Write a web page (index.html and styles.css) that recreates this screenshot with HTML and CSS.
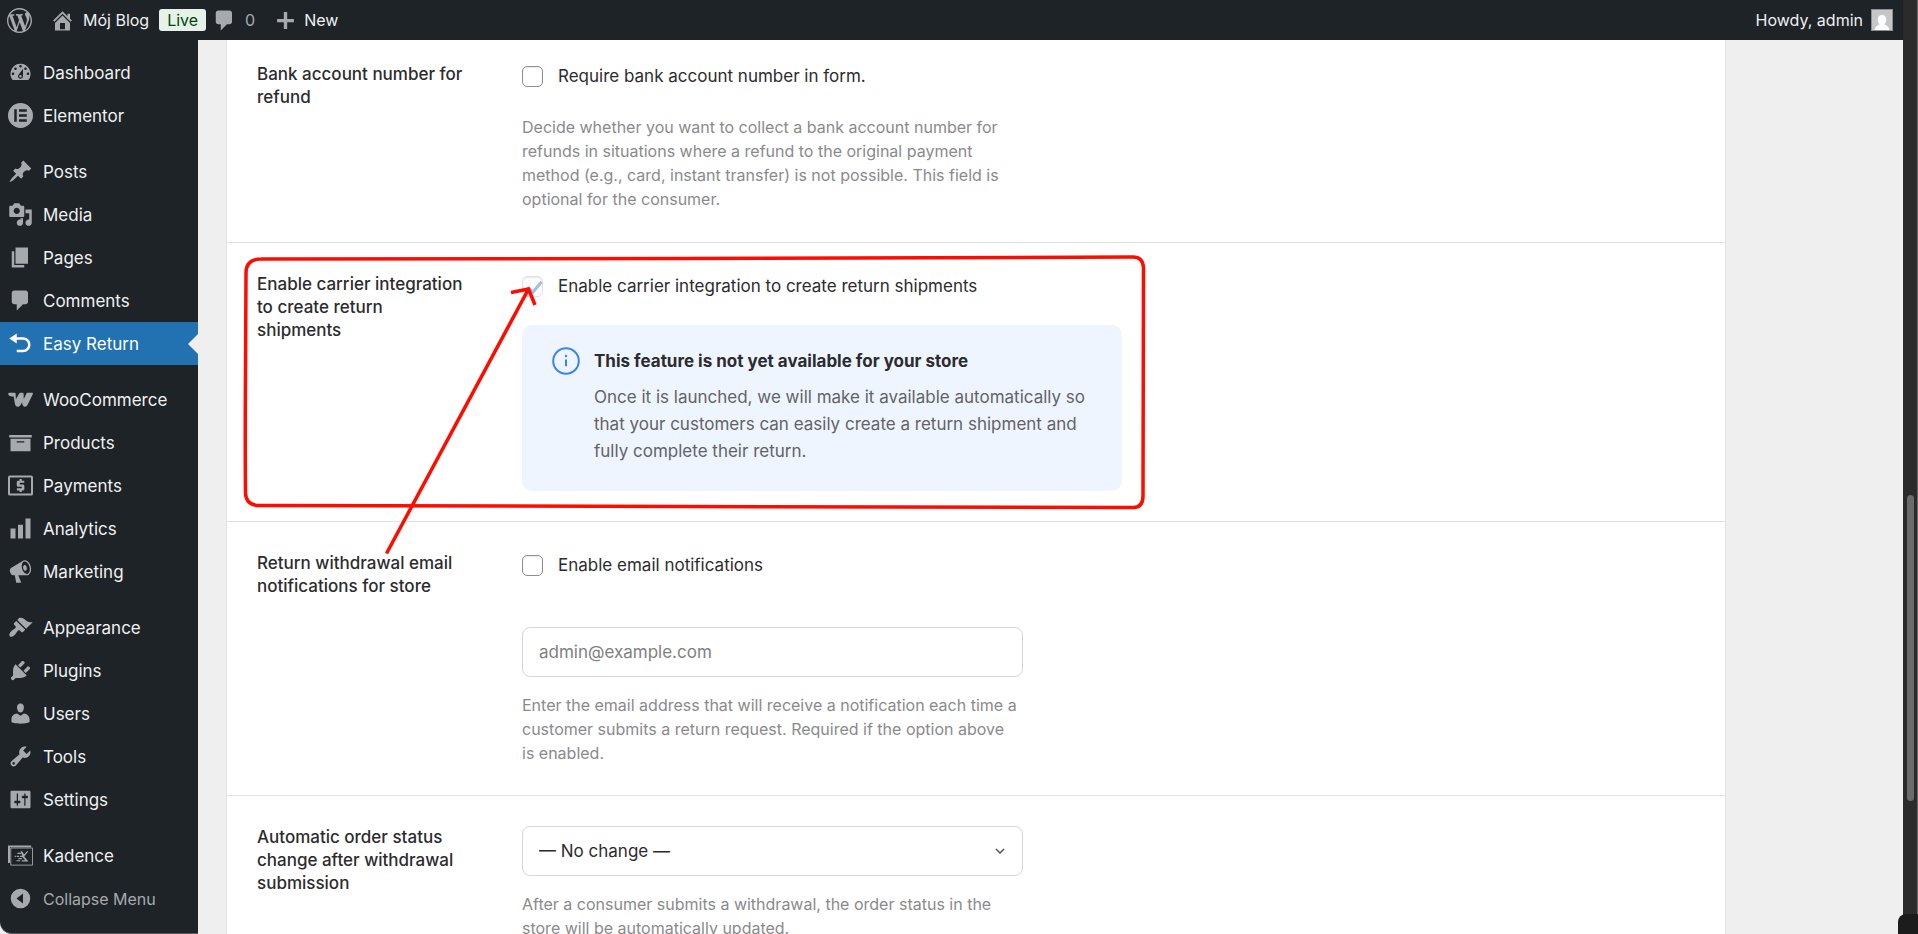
FILE: index.html
```html
<!DOCTYPE html>
<html lang="en">
<head>
<meta charset="utf-8">
<title>Easy Return settings</title>
<link rel="stylesheet" href="styles.css">
</head>
<body>
<div class="window">
  <div class="screen">
    <header class="adminbar">
      <a href="#" class="bar-item" aria-label="About WordPress"><svg class="bar-logo" viewBox="0 0 20 20"><path d="M20 10c0-5.51-4.49-10-10-10C4.48 0 0 4.49 0 10c0 5.52 4.48 10 10 10 5.51 0 10-4.48 10-10zM7.78 15.37L4.37 6.22c.55-.02 1.17-.08 1.17-.08.5-.06.44-1.13-.06-1.11 0 0-1.45.11-2.37.11-.18 0-.37 0-.58-.01C4.12 2.69 6.87 1.11 10 1.11c2.33 0 4.45.87 6.05 2.34-.68-.11-1.65.39-1.65 1.58 0 .74.45 1.36.9 2.1.35.61.55 1.36.55 2.46 0 1.49-1.4 5-1.4 5l-3.03-8.37c.54-.02.82-.17.82-.17.5-.05.44-1.25-.06-1.22 0 0-1.44.12-2.38.12-.87 0-2.33-.12-2.33-.12-.5-.03-.56 1.2-.06 1.22l.92.08 1.26 3.41zM17.41 10c.24-.64.74-1.87.43-4.25.7 1.29 1.05 2.71 1.05 4.25 0 3.29-1.73 6.24-4.4 7.78.97-2.59 1.94-5.2 2.92-7.78zM6.1 18.09C3.12 16.65 1.11 13.53 1.11 10c0-1.3.23-2.48.72-3.59C3.25 10.3 4.67 14.2 6.1 18.09zm4.03-6.63l2.58 6.98c-.86.29-1.76.45-2.71.45-.79 0-1.57-.11-2.29-.33.81-2.38 1.62-4.74 2.42-7.1z"/></svg></a>
      <a href="#" class="bar-item bar-site"><svg viewBox="0 0 20 20"><path d="M16 8.5l1.53 1.53-1.06 1.06L10 4.6l-6.47 6.49-1.06-1.06L10 2.5l4 4v-2h2v4zm-6-2.46l6 5.99V18H4v-5.97zM12 17v-5H8v5h4z"/></svg><span>Mój Blog</span></a>
      <a href="#" class="badge">Live</a>
      <a href="#" class="bar-item bar-comments"><svg viewBox="0 0 20 20"><path d="M5 2h9c1.1 0 2 .9 2 2v7c0 1.1-.9 2-2 2h-2l-5 5v-5H5c-1.1 0-2-.9-2-2V4c0-1.1.9-2 2-2z"/></svg><span class="count">0</span></a>
      <a href="#" class="bar-item bar-new"><svg viewBox="0 0 20 20"><path d="M18 8.500v3.200h-6.400v6.300H8.400v-6.300H2V8.500h6.400V2h3.200v6.500z"/></svg><span>New</span></a>
      <a href="#" class="bar-item bar-user"><span>Howdy, admin</span><svg class="avatar" viewBox="0 0 22 22"><rect width="22" height="22" fill="#8c8f94"/><rect x="1" y="1" width="20" height="20" fill="#c6c6c6"/><path fill="#fff" d="M11 6c2.600 0 4.300 2 4.300 4.600 0 2-.8 3.800-2 4.900 2.600.6 4.600 2.400 5.100 5.500H3.600c.5-3.100 2.500-4.900 5.100-5.500-1.200-1.100-2-2.900-2-4.900C6.700 8 8.400 6 11 6z"/></svg></a>
    </header>
    <div class="body">
      <nav class="sidebar" aria-label="Main menu">
        <ul class="menu">
          <li><a href="#"><svg viewBox="0 0 20 20"><path fill-rule="evenodd" d="M3.760 16h12.480A7.998 7.998 0 0010 3a7.998 7.998 0 00-6.240 13zM10 4c.55 0 1 .45 1 1s-.45 1-1 1-1-.45-1-1 .45-1 1-1zM6 6c.55 0 1 .45 1 1s-.45 1-1 1-1-.45-1-1 .45-1 1-1zm8 0c.55 0 1 .45 1 1s-.45 1-1 1-1-.45-1-1 .45-1 1-1zm-5.370 5.550L12 7v6c0 1.100-.9 2-2 2s-2-.9-2-2c0-.57.24-1.080.63-1.450zM4 10c.55 0 1 .45 1 1s-.45 1-1 1-1-.45-1-1 .45-1 1-1zm12 0c.55 0 1 .45 1 1s-.45 1-1 1-1-.45-1-1 .45-1 1-1zm-5 3c0-.55-.45-1-1-1s-1 .45-1 1 .45 1 1 1 1-.45 1-1z"/></svg>Dashboard</a></li>
          <li><a href="#"><svg viewBox="0 0 20 20"><path fill-rule="evenodd" d="M10 0a10 10 0 100 20 10 10 0 000-20zM5 5h2v10H5zM8.800 5H15v2H8.800zM8.800 9H15v2H8.800zM8.800 13H15v2H8.800z"/></svg>Elementor</a></li>
        </ul>
        <ul class="menu">
          <li><a href="#"><svg viewBox="0 0 20 20"><path d="M10.440 3.020l1.820-1.820 6.360 6.350-1.830 1.820c-1.050-.68-2.480-.57-3.410.36l-.75.75c-.92.93-1.040 2.350-.35 3.410l-1.830 1.820-2.410-2.410-2.800 2.790c-.42.42-3.380 2.710-3.800 2.290s1.860-3.390 2.280-3.810l2.790-2.790L4.100 9.360l1.830-1.820c1.050.69 2.480.57 3.400-.36l.75-.75c.93-.92 1.050-2.350.36-3.410z"/></svg>Posts</a></li>
          <li><a href="#"><svg viewBox="0 0 20 20"><path fill-rule="evenodd" d="M13 11V4c0-.55-.45-1-1-1h-1.670L9 1H5L3.670 3H2c-.55 0-1 .45-1 1v7c0 .55.45 1 1 1h10c.55 0 1-.45 1-1zM7 4.500c1.380 0 2.500 1.120 2.500 2.500S8.380 9.500 7 9.500 4.500 8.380 4.500 7 5.620 4.500 7 4.500zM14 6h5v10.500c0 1.380-1.120 2.500-2.500 2.500S14 17.880 14 16.500s1.120-2.500 2.500-2.500c.17 0 .34.02.5.05V9h-3V6zm-4 8.050V13h2v3.500c0 1.380-1.120 2.500-2.500 2.500S7 17.880 7 16.500 8.120 14 9.500 14c.17 0 .34.02.5.05z"/></svg>Media</a></li>
          <li><a href="#"><svg viewBox="0 0 20 20"><path d="M6 15V2h10v13H6zm-1 1h8v2H3V5h2v11z"/></svg>Pages</a></li>
          <li><a href="#"><svg viewBox="0 0 20 20"><path d="M5 2h9c1.100 0 2 .9 2 2v7c0 1.100-.9 2-2 2h-2l-5 5v-5H5c-1.100 0-2-.9-2-2V4c0-1.100.9-2 2-2z"/></svg>Comments</a></li>
          <li><a href="#" class="current" aria-current="page"><svg viewBox="0 0 20 20"><path d="M12 5H7V2L1 6l6 4V7h5c2.200 0 4 1.800 4 4s-1.800 4-4 4H7v2h5c3.300 0 6-2.700 6-6s-2.700-6-6-6z"/></svg>Easy Return</a></li>
        </ul>
        <ul class="menu">
          <li><a href="#"><svg viewBox="0 0 20 20"><path d="M1 4.500h4.300c.5 0 .8.3.8.8l.2 4.500 2.600-4.600c.3-.5.6-.7 1.100-.7h1.500c.7 0 1 .4 1 1l.1 4.300 1.900-4.200c.3-.8.8-1.100 1.500-1.100h3c.9 0 1.200.5.8 1.300l-4.100 8.400c-.5 1-1.200 1.500-2.100 1.500-1.400 0-2-.8-2.200-2.700l-.1-.9-1.300 2.200c-.6 1-1.300 1.400-2.100 1.400-1.300 0-2.100-.9-2.400-2.600L4.500 7.500H3.300C1.500 7.500.2 6.700.2 5.300c0-.5.3-.8.8-.8z"/></svg>WooCommerce</a></li>
          <li><a href="#"><svg viewBox="0 0 20 20"><path fill-rule="evenodd" d="M19 4v2H1V4h18zM2 7h16v10H2V7zm11 3V9H7v1h6z"/></svg>Products</a></li>
          <li><a href="#"><svg viewBox="0 0 20 20"><path fill-rule="evenodd" d="M1.500 2h17A1.500 1.500 0 0120 3.500v13a1.500 1.500 0 01-1.500 1.500h-17A1.500 1.500 0 010 16.500v-13A1.500 1.500 0 011.500 2zM1.600 3.600v12.800h16.800V3.600z"/><path d="M9.200 4.800h1.800v1.300h2v1.700H9.400v1.300h2.500c.7 0 1.200.5 1.200 1.200v2.400c0 .7-.5 1.200-1.200 1.200H11v1.300H9.200v-1.300H7.100v-1.700h3.900v-1.300H8.200c-.7 0-1.200-.5-1.200-1.200V7.300c0-.7.500-1.200 1.200-1.200h1z"/></svg>Payments</a></li>
          <li><a href="#"><svg viewBox="0 0 20 20"><path d="M18 18V2h-4v16h4zm-6 0V7H8v11h4zm-6 0v-8H2v8h4z"/></svg>Analytics</a></li>
          <li><a href="#"><svg viewBox="0 0 20 20"><path fill-rule="evenodd" d="M18.150 5.940c.46 1.620.38 3.220-.02 4.480-.42 1.280-1.260 2.180-2.300 2.480-.16.06-.26.06-.4.06-.06.02-.12.02-.18.02-.06.02-.14.02-.22.02h-6.800l2.220 5.500c.02.14-.06.26-.14.34-.08.1-.24.16-.34.16H6.950c-.1 0-.26-.06-.34-.16-.08-.08-.16-.2-.14-.34l-1-5.500H4.250l-.02-.02c-.5.06-1.080-.18-1.540-.62s-.88-1.080-1.060-1.880c-.24-.8-.2-1.560-.02-2.200.18-.62.58-1.080 1.060-1.300l.02-.02 9-5.400c.1-.06.18-.1.24-.16.06-.04.14-.08.24-.12.16-.08.28-.12.5-.18 1.040-.3 2.240.1 3.220.98s1.840 2.240 2.260 3.860zm-2.580 5.980h-.02c.4-.1.74-.34 1.040-.7.58-.7.86-1.760.86-3.040 0-.64-.1-1.300-.28-1.980-.34-1.360-1.020-2.500-1.780-3.240s-1.680-1.100-2.460-.88c-.82.22-1.400.96-1.700 2-.32 1.040-.28 2.360.06 3.720.38 1.360 1 2.500 1.800 3.240.78.74 1.620 1.100 2.480.88zm-2.540-7.080c.22-.04.42-.02.62.04.38.16.76.48 1.020 1s.42 1.200.42 1.780c0 .3-.04.56-.12.8-.18.48-.44.84-.86.94-.34.1-.8-.06-1.140-.4s-.64-.86-.78-1.500c-.18-.62-.12-1.240.02-1.720s.48-.84.82-.94z"/></svg>Marketing</a></li>
        </ul>
        <ul class="menu">
          <li><a href="#"><svg viewBox="0 0 20 20"><path d="M14.480 11.060L7.410 3.990l1.500-1.500c.5-.56 2.300-.47 3.510.32 1.210.8 1.430 1.280 2.910 2.100 1.180.64 2.450 1.260 4.450.85zm-.71.71L6.700 4.700 4.930 6.470c-.39.39-.39 1.020 0 1.410l1.060 1.060c.39.39.39 1.030 0 1.420-.6.6-1.430 1.110-2.210 1.690-.35.26-.7.53-1.010.84C1.430 14.230.4 16.080 1.400 17.070c.99 1 2.840-.03 4.180-1.360.31-.31.58-.66.85-1.020.57-.78 1.080-1.610 1.690-2.210.39-.39 1.020-.39 1.410 0l1.060 1.060c.39.39 1.020.39 1.410 0z"/></svg>Appearance</a></li>
          <li><a href="#"><svg viewBox="0 0 20 20"><path d="M13.110 4.360L9.870 7.600 8 5.730l3.240-3.240c.35-.34 1.050-.2 1.560.32.520.51.66 1.210.31 1.550zm-8 1.770l.91-1.120 9.010 9.010-1.190.84c-.71.71-2.630 1.160-3.820 1.160H6.140L4.900 17.260c-.59.59-1.540.59-2.120 0-.59-.58-.59-1.530 0-2.120l1.240-1.240v-3.880c0-1.130.4-3.190 1.090-3.890zm7.260 3.970l3.240-3.240c.34-.35 1.040-.21 1.550.31.520.51.66 1.210.31 1.550l-3.240 3.250z"/></svg>Plugins</a></li>
          <li><a href="#"><svg viewBox="0 0 20 20"><path d="M10 9.250c-2.270 0-2.730-3.440-2.730-3.440C7 4.020 7.820 2 9.970 2c2.160 0 2.980 2.020 2.710 3.810 0 0-.41 3.440-2.680 3.440zm0 2.570L12.720 10c2.390 0 4.520 2.330 4.520 4.530v2.490s-3.650 1.130-7.240 1.130c-3.650 0-7.240-1.130-7.240-1.130v-2.490c0-2.250 1.940-4.480 4.470-4.480z"/></svg>Users</a></li>
          <li><a href="#"><svg viewBox="0 0 20 20"><path fill-rule="evenodd" d="M16.680 9.770c-1.340 1.340-3.300 1.670-4.950.99l-5.410 6.520c-.99.99-2.590.99-3.580 0s-.99-2.590 0-3.570l6.520-5.420c-.68-1.650-.35-3.610.99-4.950 1.280-1.280 3.120-1.620 4.720-1.060l-2.890 2.890 2.820 2.820 2.860-2.870c.53 1.580.18 3.390-1.080 4.650zM3.810 16.210c.4.39 1.040.39 1.430 0 .4-.4.4-1.040 0-1.430-.39-.4-1.030-.4-1.430 0-.39.39-.39 1.030 0 1.430z"/></svg>Tools</a></li>
          <li><a href="#"><svg viewBox="0 0 20 20"><path fill-rule="evenodd" d="M18 16V4c0-.55-.45-1-1-1H3c-.55 0-1 .45-1 1v12c0 .55.45 1 1 1h14c.55 0 1-.45 1-1zM8 11h1c.55 0 1 .45 1 1s-.45 1-1 1H8v1.500c0 .28-.22.5-.5.5s-.5-.22-.5-.5V13H6c-.55 0-1-.45-1-1s.45-1 1-1h1V5.500c0-.28.22-.5.5-.5s.5.22.5.5V11zm5-2h-1c-.55 0-1-.45-1-1s.45-1 1-1h1V5.500c0-.28.22-.5.5-.5s.5.22.5.5V7h1c.55 0 1 .45 1 1s-.45 1-1 1h-1v5.500c0 .28-.22.5-.5.5s-.5-.22-.5-.5V9z"/></svg>Settings</a></li>
        </ul>
        <ul class="menu">
          <li><a href="#"><svg viewBox="0 0 20 20"><path d="M0 2h18.500v1.400H1.600V16H0z"/><path fill="none" stroke="currentColor" stroke-width=".7" d="M2.200 4h17.400v13.700H2.200z"/><path d="M10 6.500h1.300l1.600 2.700 2.300-2.700h1.100l-3.300 4.200 3.300 4.100h-5.300v-1.100h2.800L11.400 11.200H9.500v-1h1.900zM7.500 7.800h2.900v.9H7.500zM8.400 12h2.700v.9H8.400zM6.800 13.700h2.900v.9H6.800zM5.300 10.200h1v1h-1zM7 10.200h1.800v1H7z"/></svg>Kadence</a></li>
          <li><button type="button" class="collapse"><svg viewBox="0 0 20 20"><path fill-rule="evenodd" d="M10 2.200a7.800 7.800 0 100 15.600 7.800 7.800 0 000-15.600zM12 6v8l-5.200-4z"/></svg>Collapse Menu</button></li>
        </ul>
      </nav>
      <main class="content">
        <form class="panel">
          <section class="setting setting-first">
            <h2 class="setting-title">Bank account number for refund</h2>
            <div class="setting-field">
              <label class="check"><input type="checkbox"><span>Require bank account number in form.</span></label>
              <p class="help help-check">Decide whether you want to collect a bank account number for refunds in situations where a refund to the original payment method (e.g., card, instant transfer) is not possible. This field is optional for the consumer.</p>
            </div>
          </section>
          <section class="setting">
            <h2 class="setting-title">Enable carrier integration to create return shipments</h2>
            <div class="setting-field">
              <label class="check"><input type="checkbox" checked disabled><span>Enable carrier integration to create return shipments</span></label>
              <div class="notice">
                <svg class="notice-icon" viewBox="0 0 28 28"><circle cx="14" cy="14" r="12.800"/><path d="M14 12.500v6.700"/><circle class="dot" cx="14" cy="9" r="1.200"/></svg>
                <div>
                  <h3 class="notice-title">This feature is not yet available for your store</h3>
                  <p class="notice-text">Once it is launched, we will make it available automatically so that your customers can easily create a return shipment and fully complete their return.</p>
                </div>
              </div>
            </div>
            <svg class="annotation" viewBox="0 0 930 320" aria-hidden="true"><path d="M34 16 Q300 15 460 15.500 Q700 15 906 14 Q916 14 916.500 25 L916 253 Q916 264.500 906 264.500 Q600 264 460 263.500 Q200 263 34 262.500 Q19 263 18.500 250 Q18 200 18.500 130 L19 30 Q19 16 34 16"/><path d="M159.500 310.500L301.500 46M284 49.500L301.500 46L308 62"/></svg>
          </section>
          <section class="setting">
            <h2 class="setting-title">Return withdrawal email notifications for store</h2>
            <div class="setting-field">
              <label class="check"><input type="checkbox"><span>Enable email notifications</span></label>
              <input class="control control-email" type="email" placeholder="admin@example.com" aria-label="Notification email">
              <p class="help">Enter the email address that will receive a notification each time a customer submits a return request. Required if the option above is enabled.</p>
            </div>
          </section>
          <section class="setting">
            <h2 class="setting-title">Automatic order status change after withdrawal submission</h2>
            <div class="setting-field">
              <div class="select-wrap">
                <select class="control" aria-label="Order status after withdrawal"><option>— No change —</option></select>
                <svg class="chevron" viewBox="0 0 10 6"><path d="M1 1l4 4 4-4"/></svg>
              </div>
              <p class="help">After a consumer submits a withdrawal, the order status in the store will be automatically updated.</p>
            </div>
          </section>
        </form>
      </main>
    </div>
  </div>
  <div class="scrollbar" aria-hidden="true"><div class="thumb"></div></div>
  <div class="corner" aria-hidden="true"></div>
</div>
</body>
</html>
```
FILE: styles.css
```css
* { box-sizing: border-box; }
body {
  margin: 0;
  font-family: Inter, "Liberation Sans", sans-serif;
  font-size: 17px;
  color: #2c2c2e;
  background: #efefef;
}
a { color: inherit; text-decoration: none; }
h2, h3, p, ul { margin: 0; padding: 0; }
ul { list-style: none; }
svg { display: block; fill: currentColor; flex: none; }

.window { position: relative; display: flex; height: 100vh; overflow: hidden; }
.screen { flex: 1; min-width: 0; display: flex; flex-direction: column; }

.adminbar {
  display: flex;
  align-items: center;
  height: 40px;
  flex: none;
  padding: 0 10px 0 7px;
  background: #1d2327;
  color: #f0f0f1;
  font-size: 16px;
}
.bar-item { display: flex; align-items: center; gap: 8px; }
.bar-item svg { width: 25px; height: 25px; color: #a7aaad; }
.bar-site { margin-left: 18px; }
.badge {
  margin: 0 6px 0 10px;
  padding: 0 8px;
  border-radius: 3px;
  background: #e6f2e8;
  color: #00450c;
  line-height: 22px;
}
.count { color: #a7aaad; }
.bar-new { margin-left: 20px; }
.bar-item.bar-new svg { width: 21px; height: 21px; }
.bar-user { margin-left: auto; }
.bar-item .avatar { width: 22px; height: 22px; }

.body { flex: 1; min-height: 0; display: flex; }

.sidebar {
  width: 198px;
  flex: none;
  display: flex;
  flex-direction: column;
  gap: 13px;
  padding-top: 11px;
  background: #1d2327;
  border-bottom: 1px solid #5a5e61;
  border-bottom-left-radius: 12px;
  color: #f0f0f1;
}
.menu a, .collapse {
  position: relative;
  display: flex;
  align-items: center;
  gap: 10px;
  width: 100%;
  height: 43px;
  padding: 0 0 0 8px;
  border: 0;
  background: none;
  color: #f0f0f1;
  font: inherit;
  text-align: left;
}
.menu svg { width: 25px; height: 25px; color: #a7aaad; }
.menu .current { background: #2271b1; color: #fff; }
.menu .current svg { color: #fff; }
.current::after {
  content: "";
  position: absolute;
  right: 0;
  top: 50%;
  margin-top: -10px;
  border: 10px solid transparent;
  border-left: 0;
  border-right-color: #efefef;
}
.menu .collapse { color: #a7aaad; font-size: 16px; }

.content { flex: 1; min-width: 0; padding-left: 28px; }
.panel {
  max-width: 1500px;
  min-height: 100%;
  background: #fff;
  border: solid #e2e2e4;
  border-width: 0 1px;
}
.setting {
  position: relative;
  display: flex;
  padding: 30px;
  border-bottom: 1px solid #e2e2e4;
}
.setting-first { padding: 23px 30px 31px; }
.setting-title {
  width: 212px;
  margin-right: 53px;
  flex: none;
  font-size: 17px;
  font-weight: 500;
  line-height: 23px;
}
.setting-field { flex: 1; min-width: 0; }
.check { display: flex; align-items: center; gap: 15px; height: 26px; }
.check input {
  appearance: none;
  width: 21px;
  height: 21px;
  margin: 0;
  flex: none;
  border: 1px solid #8c8f94;
  border-radius: 5px;
  background: #fff;
  box-shadow: inset 0 1px 2px rgba(0, 0, 0, .1);
}
.check input:disabled { border-color: #e2e2e4; }
.check input:checked::before {
  content: "";
  display: block;
  width: 6px;
  height: 12px;
  margin: 1px 0 0 7px;
  border: solid #9ec2e2;
  border-width: 0 3px 3px 0;
  transform: rotate(40deg);
}
.help {
  max-width: 497px;
  margin-top: 16px;
  color: #8a8a8c;
  font-size: 16px;
  line-height: 24px;
}
.help-check { margin-top: 26px; }

.notice {
  display: flex;
  gap: 14px;
  max-width: 600px;
  margin-top: 26px;
  padding: 22px 30px 26px;
  border-radius: 10px;
  background: #eef5ff;
}
.notice-icon {
  width: 28px;
  height: 28px;
  fill: none;
  stroke: #3b82f6;
  stroke-width: 2;
}
.notice-icon .dot { fill: #3b82f6; stroke: none; }
.notice-title { font-size: 17px; font-weight: 700; line-height: 29px; margin-bottom: 8px; }
.notice-text { color: #636366; line-height: 27px; }

.control {
  display: block;
  width: 501px;
  max-width: 100%;
  height: 50px;
  padding: 0 16px;
  appearance: none;
  border: 1px solid #d6d6d8;
  border-radius: 8px;
  background: #fff;
  color: #2c2c2e;
  font: inherit;
}
.control::placeholder { color: #808082; opacity: 1; }
.control-email { margin-top: 49px; }
.select-wrap { position: relative; width: 501px; max-width: 100%; }
.chevron {
  position: absolute;
  right: 18px;
  top: 22px;
  width: 10px;
  height: 6px;
  fill: none;
  stroke: #555;
  stroke-width: 1.5;
}
.annotation {
  position: absolute;
  left: 0;
  top: 0;
  width: 930px;
  height: 320px;
  z-index: 1;
  fill: none;
  stroke: #ff0c00;
  stroke-width: 3.5;
  pointer-events: none;
}

.scrollbar {
  width: 15px;
  flex: none;
  padding: 495px 3px 0 4px;
  background: #2b2b2b;
  border-right: 1px solid #6a6a6a;
}
.thumb { height: 306px; border-radius: 4px; background: #6b6b6b; }
.corner {
  position: absolute;
  right: 0;
  bottom: 0;
  width: 20px;
  height: 20px;
  border-top-left-radius: 8px;
  background: #1c1c1c;
}
```
